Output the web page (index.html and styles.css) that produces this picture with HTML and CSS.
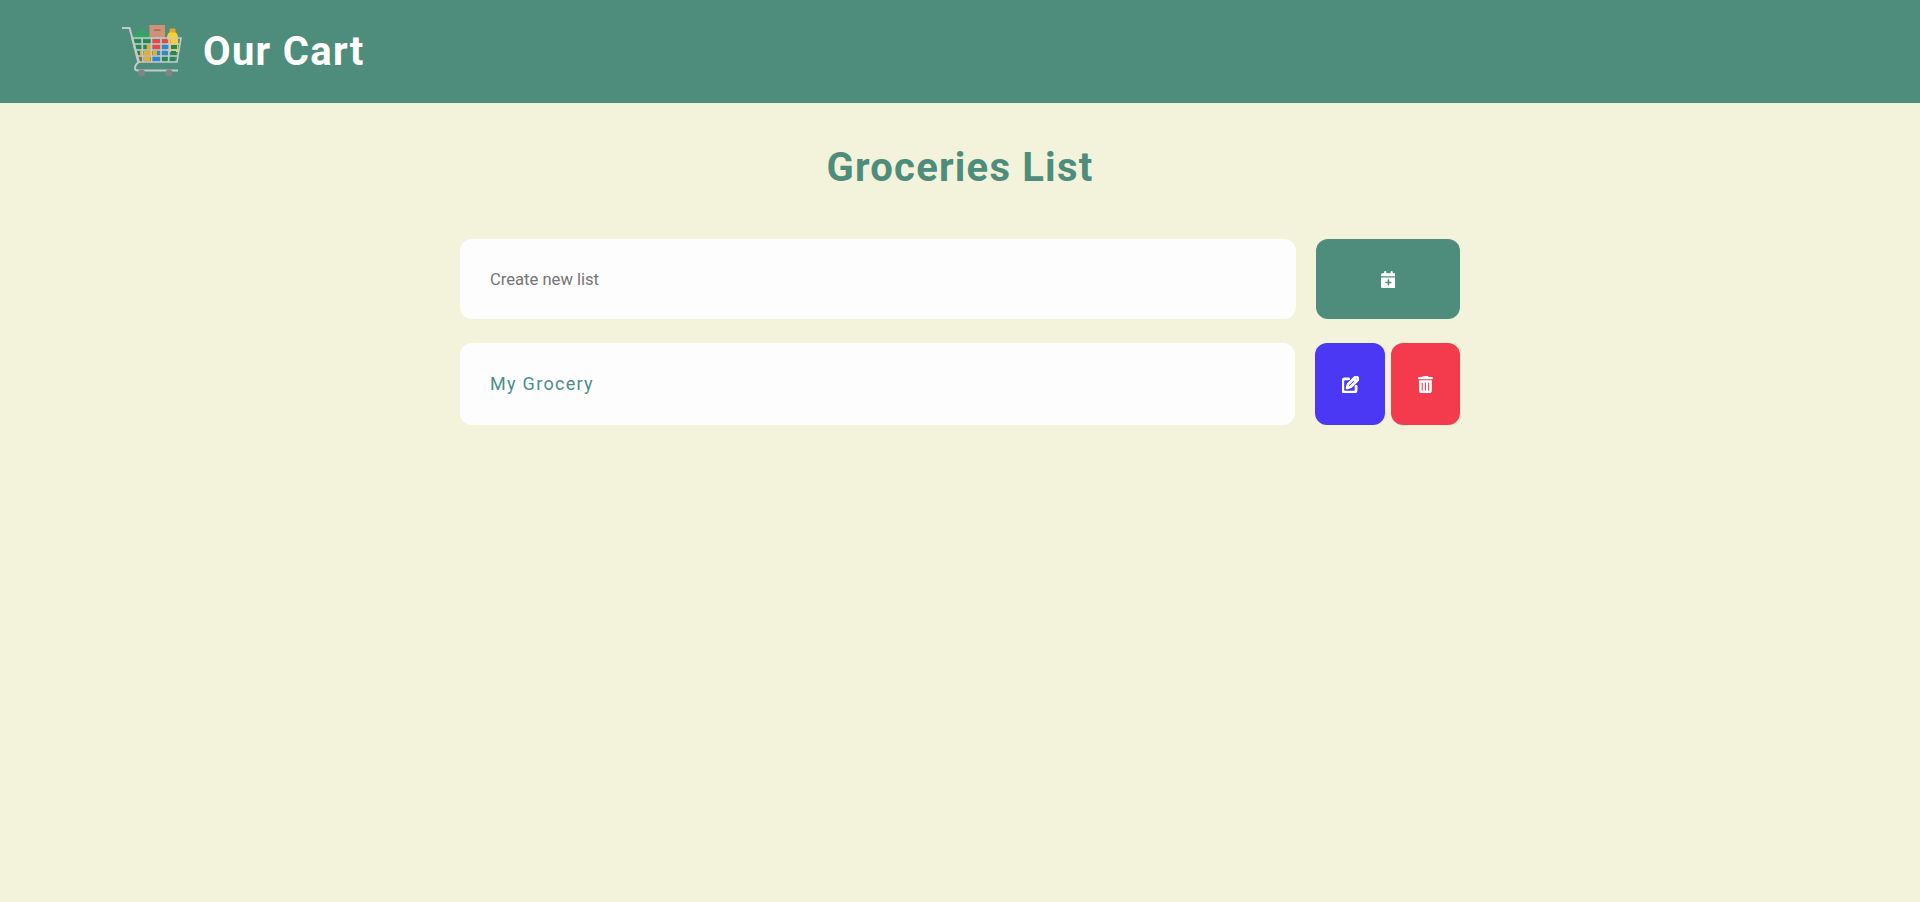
FILE: index.html
```html
<!DOCTYPE html>
<html lang="en">
<head>
    <meta charset="UTF-8">
    <meta name="viewport" content="width=device-width, initial-scale=1.0">
    <title>Our Cart</title>
    <link rel="stylesheet" href="styles.css">
</head>
<body>

    <header class="navbar">
        <svg class="logo" viewBox="0 0 60 54" aria-hidden="true">
            <!-- goods in the cart -->
            <path d="M10 14 C10 9 13 8 15 8 C16 4 21 3 23 6 C26 6 28 9 28 14 Z" fill="#35a268"/>
            <rect x="27.5" y="0" width="15.5" height="14" fill="#cf9276"/>
            <rect x="32" y="4.5" width="6.5" height="1.2" fill="#96604a"/>
            <path d="M48 7 h5 c2 1 3 3 3 6 v14 h-11 v-14 c0 -3 1 -5 3 -6 Z" fill="#f9cf2f"/>
            <rect x="47.5" y="3.5" width="6" height="4" rx="1.2" fill="#eaa32b"/>
            <!-- items behind the basket wires -->
            <rect x="12" y="14.5" width="7" height="4" fill="#1f8a55"/>
            <rect x="21" y="14.5" width="8" height="4" fill="#1f8a55"/>
            <rect x="30" y="14.5" width="8" height="4" fill="#ef4344"/>
            <rect x="40" y="14.5" width="6" height="4" fill="#ef4344"/>
            <rect x="46" y="14.5" width="3" height="4" fill="#f2a922"/>
            <rect x="49" y="14.5" width="7" height="4" fill="#f9cf2f"/>
            <rect x="14" y="20" width="5" height="4" fill="#1f8a55"/>
            <rect x="21" y="20" width="3" height="4" fill="#1f8a55"/>
            <rect x="25" y="20" width="5" height="4" fill="#f2a922"/>
            <rect x="31" y="20" width="7" height="4" fill="#ef4344"/>
            <rect x="40" y="20" width="7" height="4" fill="#2f86d6"/>
            <rect x="49" y="20" width="6" height="4" fill="#1f8a55"/>
            <rect x="15" y="26" width="3" height="4" fill="#1f8a55"/>
            <rect x="18" y="26" width="2" height="4" fill="#f2a922"/>
            <rect x="22" y="26" width="7" height="4" fill="#f2a922"/>
            <rect x="31" y="26" width="4" height="4" fill="#f2a922"/>
            <rect x="35" y="26" width="3" height="4" fill="#2f86d6"/>
            <rect x="40" y="26" width="7" height="4" fill="#2f86d6"/>
            <rect x="49" y="26" width="5" height="4" fill="#1f8a55"/>
            <rect x="16" y="32" width="5" height="4" fill="#96604a"/>
            <rect x="22" y="32" width="6" height="4" fill="#f2a922"/>
            <rect x="31" y="32" width="7" height="4" fill="#2f86d6"/>
            <rect x="40" y="32" width="6" height="4" fill="#1f8a55"/>
            <rect x="48" y="32" width="5" height="4" fill="#1f8a55"/>
            <!-- cart frame -->
            <path d="M10 13 H59 L55 37 H16 Z M11 19 H58 M13 25 H57 M14.5 31 H56 M20 13 L21 37 M29.5 13 V37 M39 13 V37 M47.5 13 L46.5 37" fill="none" stroke="#c6cac5" stroke-width="1.6"/>
            <path d="M0 3 H7.5 L17 37 C14 39 13 41 13 43 C13 45 14 45.5 16 45.5 H56" fill="none" stroke="#c6cac5" stroke-width="2"/>
            <circle cx="19.5" cy="48" r="3.6" fill="#7f8583"/>
            <circle cx="47" cy="48" r="3.6" fill="#7f8583"/>
        </svg>
        <h1 class="brand">Our Cart</h1>
    </header>

    <main class="list-container">
        <h2 class="page-title">Groceries List</h2>

        <form class="list-row new-row">
            <input class="list-input" type="text" placeholder="Create new list">
            <button class="btn btn-add" type="button" aria-label="Create">
                <svg class="icon" viewBox="0 0 448 512"><path d="M96 32V64H48C21.5 64 0 85.5 0 112v48H448V112c0-26.5-21.5-48-48-48H352V32c0-17.7-14.3-32-32-32s-32 14.3-32 32V64H160V32c0-17.7-14.3-32-32-32S96 14.3 96 32zM448 192H0V464c0 26.5 21.5 48 48 48H400c26.5 0 48-21.5 48-48V192zM224 248c13.3 0 24 10.7 24 24v48h48c13.3 0 24 10.7 24 24s-10.7 24-24 24H248v48c0 13.3-10.7 24-24 24s-24-10.7-24-24V368H152c-13.3 0-24-10.7-24-24s10.7-24 24-24h48V272c0-13.3 10.7-24 24-24z"/></svg>
            </button>
        </form>

        <div class="list-row item-row">
            <div class="list-name">My Grocery</div>
            <div class="item-actions">
                <button class="btn btn-edit" type="button" aria-label="Edit">
                    <svg class="icon icon-edit" viewBox="0 0 512 512"><path d="M441 58.9L453.1 71c9.4 9.4 9.4 24.6 0 33.9L424 134.1 377.9 88 407 58.9c9.4-9.4 24.6-9.4 33.9 0zM209.8 256.2L344 121.9 390.1 168 255.8 302.2c-2.9 2.9-6.5 5-10.4 6.1l-58.5 16.7 16.7-58.5c1.1-3.9 3.2-7.5 6.1-10.4zM373.1 25L175.8 222.2c-8.7 8.7-15 19.4-18.3 31.1l-28.6 100c-2.4 8.4-.1 17.4 6.1 23.6s15.2 8.5 23.6 6.1l100-28.6c11.8-3.4 22.5-9.7 31.1-18.3L487 138.9c28.1-28.1 28.1-73.7 0-101.8L474.9 25C446.8-3.1 401.2-3.1 373.1 25zM88 64C39.4 64 0 103.4 0 152V424c0 48.6 39.4 88 88 88H360c48.6 0 88-39.4 88-88V312c0-13.3-10.7-24-24-24s-24 10.7-24 24V424c0 22.1-17.9 40-40 40H88c-22.1 0-40-17.9-40-40V152c0-22.1 17.9-40 40-40H200c13.3 0 24-10.7 24-24s-10.7-24-24-24H88z"/></svg>
                </button>
                <button class="btn btn-delete" type="button" aria-label="Delete">
                    <svg class="icon" viewBox="0 0 448 512"><path d="M135.2 17.7C140.6 6.8 151.7 0 163.8 0H284.2c12.1 0 23.2 6.8 28.6 17.7L320 32h96c17.7 0 32 14.3 32 32s-14.3 32-32 32H32C14.3 96 0 81.7 0 64S14.3 32 32 32h96l7.2-14.3zM32 128H416V448c0 35.3-28.7 64-64 64H96c-35.3 0-64-28.7-64-64V128zm96 64c-8.8 0-16 7.2-16 16V432c0 8.8 7.2 16 16 16s16-7.2 16-16V208c0-8.8-7.2-16-16-16zm96 0c-8.8 0-16 7.2-16 16V432c0 8.8 7.2 16 16 16s16-7.2 16-16V208c0-8.8-7.2-16-16-16zm96 0c-8.8 0-16 7.2-16 16V432c0 8.8 7.2 16 16 16s16-7.2 16-16V208c0-8.8-7.2-16-16-16z"/></svg>
                </button>
            </div>
        </div>
    </main>

</body>
</html>
```

FILE: styles.css
```css
* {
    box-sizing: border-box;
}

body {
    margin: 0;
    min-height: 100vh;
    background: #f3f3db;
    font-family: Roboto, sans-serif;
}

.navbar {
    display: flex;
    align-items: center;
    gap: 21px;
    height: 103px;
    padding: 0 0 0 122px;
    background: #4e8d7b;
}

.logo {
    width: 60px;
    height: 54px;
    filter: blur(0.3px);
}

.brand {
    margin: 0;
    color: #fff;
    font-size: 40px;
    font-weight: 700;
    letter-spacing: 1.3px;
}

.list-container {
    width: 1000px;
    margin: 0 auto;
}

.page-title {
    margin: 41px 0 48px;
    color: #4e8d7b;
    font-size: 40px;
    line-height: 47px;
    font-weight: 700;
    letter-spacing: 1.2px;
    text-align: center;
}

.list-row {
    display: flex;
}

.new-row {
    gap: 20px;
    height: 80px;
    margin-bottom: 24px;
}

.item-row {
    gap: 20px;
    height: 82px;
}

.list-input,
.list-name {
    flex: 1;
    padding: 0 30px;
    background: #fdfdfd;
    border: none;
    border-radius: 12px;
}

.list-input {
    font-family: inherit;
    font-size: 16.6px;
}

.list-input::placeholder {
    color: #757575;
}

.list-name {
    display: flex;
    align-items: center;
    padding-bottom: 2px;
    color: #4a8f8a;
    font-size: 18px;
    letter-spacing: 1.3px;
}

.item-actions {
    display: flex;
    gap: 6px;
}

.btn {
    display: flex;
    align-items: center;
    justify-content: center;
    padding: 0;
    color: #fff;
    border: none;
    border-radius: 12px;
    cursor: pointer;
}

.btn-add {
    width: 144px;
    background: #4e8d7b;
}

.btn-edit {
    width: 70px;
    background: #4a38f5;
}

.btn-delete {
    width: 69px;
    background: #f43b4e;
}

.icon {
    height: 17px;
    fill: currentColor;
}

.icon-edit {
    stroke: currentColor;
    stroke-width: 36px;
}
```
